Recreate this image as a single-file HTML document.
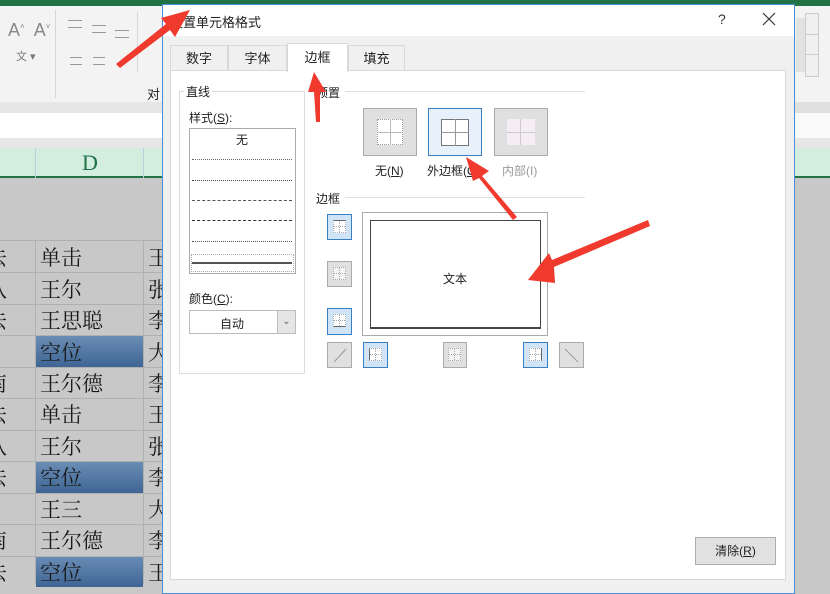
<!DOCTYPE html>
<html><head><meta charset="utf-8"><style>
*{margin:0;padding:0;box-sizing:border-box}
body{width:830px;height:584px;overflow:hidden;position:relative;background:#c8c8c8;font-family:"Liberation Sans","Noto Sans CJK SC",sans-serif;font-size:12px;color:#222}
.a{position:absolute}
.cell{position:absolute;font-family:"Noto Serif CJK SC",serif;font-size:21px;color:#1a1a1a;line-height:31px}
.bb{position:absolute;border:1px solid #aaa;background:#e0e0e0}
.bs{position:absolute;border:1px solid #3a7fc4;background:#cfe4f7}
.g{position:absolute;width:13px;height:13px;background:#fff;border:1px dotted #aaa}
.g:before{content:"";position:absolute;left:5px;top:0;width:1px;height:11px;border-left:1px dotted #aaa}
.g:after{content:"";position:absolute;left:0;top:5px;width:11px;height:1px;border-top:1px dotted #aaa}
</style></head><body>
<div class="a" style="left:0;top:0;width:830px;height:6px;background:#217346"></div>
<div class="a" style="left:0;top:6px;width:830px;height:96px;background:#f3f3f3"></div>
<div class="a" style="left:55px;top:10px;width:1px;height:88px;background:#d6d6d6"></div>
<div class="a" style="left:8px;top:20px;font-size:18px;color:#888">A<sup style="font-size:8px">˄</sup>&nbsp; A<sup style="font-size:8px">˅</sup></div>
<div class="a" style="left:16px;top:48px;font-size:11px;color:#777">文 ▾</div>
<div class="a" style="left:68px;top:20px;width:14px;height:8px;border-top:1px solid #999;border-bottom:1px solid #999"></div>
<div class="a" style="left:92px;top:25px;width:14px;height:8px;border-top:1px solid #999;border-bottom:1px solid #999"></div>
<div class="a" style="left:115px;top:30px;width:14px;height:8px;border-top:1px solid #999;border-bottom:1px solid #999"></div>
<div class="a" style="left:70px;top:57px;width:12px;height:8px;border-top:1px solid #999;border-bottom:1px solid #999"></div>
<div class="a" style="left:93px;top:57px;width:12px;height:8px;border-top:1px solid #999;border-bottom:1px solid #999"></div>
<div class="a" style="left:137px;top:12px;width:1px;height:60px;background:#d6d6d6"></div>
<div class="a" style="left:147px;top:84px;font-size:13px">对</div>
<div class="a" style="left:0;top:102px;width:830px;height:11px;background:#e6e6e6"></div>
<div class="a" style="left:0;top:113px;width:830px;height:25px;background:#fff"></div>
<div class="a" style="left:0;top:138px;width:830px;height:10px;background:#e6e6e6"></div>
<div class="a" style="left:0;top:148px;width:830px;height:30px;background:#d3eddf;border-bottom:2px solid #217346"></div>
<div class="a" style="left:35px;top:148px;width:1px;height:30px;background:#bcd"></div>
<div class="a" style="left:143px;top:148px;width:1px;height:30px;background:#bcd"></div>
<div class="a" style="left:82px;top:150px;font-family:'Liberation Serif',serif;font-size:22px;color:#217346">D</div>
<div class="a" style="left:0;top:178px;width:830px;height:406px;background:#c8c8c8"></div>
<div class="a" style="left:35px;top:241px;width:1px;height:343px;background:#b0b0b0"></div>
<div class="a" style="left:143px;top:241px;width:1px;height:343px;background:#b0b0b0"></div>
<div class="a" style="left:36px;top:336px;width:107px;height:31px;background:linear-gradient(#6a8db5,#3e6594)"></div>
<div class="a" style="left:36px;top:462px;width:107px;height:31px;background:linear-gradient(#6a8db5,#3e6594)"></div>
<div class="a" style="left:36px;top:556px;width:107px;height:31px;background:linear-gradient(#6a8db5,#3e6594)"></div>
<div class="a" style="left:0;top:240px;width:170px;height:1px;background:#b0b0b0"></div>
<div class="a" style="left:0;top:272px;width:170px;height:1px;background:#b0b0b0"></div>
<div class="a" style="left:0;top:304px;width:170px;height:1px;background:#b0b0b0"></div>
<div class="a" style="left:0;top:335px;width:170px;height:1px;background:#b0b0b0"></div>
<div class="a" style="left:0;top:367px;width:170px;height:1px;background:#b0b0b0"></div>
<div class="a" style="left:0;top:398px;width:170px;height:1px;background:#b0b0b0"></div>
<div class="a" style="left:0;top:430px;width:170px;height:1px;background:#b0b0b0"></div>
<div class="a" style="left:0;top:461px;width:170px;height:1px;background:#b0b0b0"></div>
<div class="a" style="left:0;top:493px;width:170px;height:1px;background:#b0b0b0"></div>
<div class="a" style="left:0;top:524px;width:170px;height:1px;background:#b0b0b0"></div>
<div class="a" style="left:0;top:556px;width:170px;height:1px;background:#b0b0b0"></div>
<div class="cell" style="left:-14px;top:242px">去</div>
<div class="cell" style="left:-14px;top:274px">八</div>
<div class="cell" style="left:-14px;top:305px">去</div>
<div class="cell" style="left:-14px;top:368px">南</div>
<div class="cell" style="left:-14px;top:399px">去</div>
<div class="cell" style="left:-14px;top:431px">八</div>
<div class="cell" style="left:-14px;top:462px">去</div>
<div class="cell" style="left:-14px;top:525px">南</div>
<div class="cell" style="left:-14px;top:557px">去</div>
<div class="cell" style="left:40px;top:242px">单击</div>
<div class="cell" style="left:40px;top:274px">王尔</div>
<div class="cell" style="left:40px;top:305px">王思聪</div>
<div class="cell" style="left:40px;top:337px">空位</div>
<div class="cell" style="left:40px;top:368px">王尔德</div>
<div class="cell" style="left:40px;top:399px">单击</div>
<div class="cell" style="left:40px;top:431px">王尔</div>
<div class="cell" style="left:40px;top:462px">空位</div>
<div class="cell" style="left:40px;top:494px">王三</div>
<div class="cell" style="left:40px;top:525px">王尔德</div>
<div class="cell" style="left:40px;top:557px">空位</div>
<div class="cell" style="left:148px;top:242px">王</div>
<div class="cell" style="left:148px;top:274px">张</div>
<div class="cell" style="left:148px;top:305px">李</div>
<div class="cell" style="left:148px;top:337px">大</div>
<div class="cell" style="left:148px;top:368px">李</div>
<div class="cell" style="left:148px;top:399px">王</div>
<div class="cell" style="left:148px;top:431px">张</div>
<div class="cell" style="left:148px;top:462px">李</div>
<div class="cell" style="left:148px;top:494px">大</div>
<div class="cell" style="left:148px;top:525px">李</div>
<div class="cell" style="left:148px;top:557px">王</div>
<div class="a" style="left:795px;top:6px;width:35px;height:96px;background:#f3f3f3"></div>
<div class="a" style="left:796px;top:18px;width:10px;height:54px;background:#e2e2e2"></div>
<div class="a" style="left:805px;top:13px;width:14px;height:64px;border:1px solid #ccc;background:#f0f0f0"></div>
<div class="a" style="left:805px;top:34px;width:14px;height:1px;background:#ccc"></div>
<div class="a" style="left:805px;top:54px;width:14px;height:1px;background:#ccc"></div>
<div class="a" style="left:795px;top:102px;width:35px;height:11px;background:#e0e0e0"></div>
<div class="a" style="left:795px;top:113px;width:35px;height:25px;background:#fafafa"></div>
<!-- Dialog -->
<div class="a" style="left:162px;top:4px;width:633px;height:590px;background:#f0f0f0;border:1px solid #4a90d9"></div>
<div class="a" style="left:163px;top:5px;width:631px;height:31px;background:#fff"></div>
<div class="a" style="left:170px;top:12px;font-size:13px;color:#222">设置单元格格式</div>
<div class="a" style="left:718px;top:11px;font-size:14px;color:#333">?</div>
<svg class="a" style="left:762px;top:12px" width="14" height="14"><path d="M1 1L13 13M13 1L1 13" stroke="#333" stroke-width="1.2"/></svg>
<div class="a" style="left:170px;top:45px;width:58px;height:26px;border:1px solid #d9d9d9;border-bottom:none;background:#f0f0f0;text-align:center;line-height:26px;font-size:13px">数字</div>
<div class="a" style="left:228px;top:45px;width:59px;height:26px;border:1px solid #d9d9d9;border-bottom:none;background:#f0f0f0;text-align:center;line-height:26px;font-size:13px">字体</div>
<div class="a" style="left:348px;top:45px;width:57px;height:26px;border:1px solid #d9d9d9;border-bottom:none;background:#f0f0f0;text-align:center;line-height:26px;font-size:13px">填充</div>
<div class="a" style="left:170px;top:70px;width:616px;height:510px;background:#fff;border:1px solid #d9d9d9"></div>
<div class="a" style="left:287px;top:43px;width:61px;height:29px;border:1px solid #d9d9d9;border-bottom:none;background:#fff;text-align:center;line-height:28px;font-size:13px">边框</div>
<div class="a" style="left:179px;top:91px;width:126px;height:283px;border:1px solid #dcdcdc"></div>
<div class="a" style="left:184px;top:83px;background:#fff;padding:0 2px;font-size:12px">直线</div>
<div class="a" style="left:189px;top:109px">样式(<u>S</u>):</div>
<div class="a" style="left:189px;top:128px;width:107px;height:146px;border:1px solid #aaa"></div>
<div class="a" style="left:236px;top:131px;font-size:12px">无</div>
<div class="a" style="left:192px;top:159px;width:100px;border-top:1px dotted #666"></div>
<div class="a" style="left:192px;top:180px;width:100px;border-top:1px dotted #444"></div>
<div class="a" style="left:192px;top:200px;width:100px;border-top:1px dashed #555"></div>
<div class="a" style="left:192px;top:220px;width:100px;border-top:1px dashed #333"></div>
<div class="a" style="left:192px;top:241px;width:100px;border-top:1px dotted #555"></div>
<div class="a" style="left:191px;top:254px;width:103px;height:18px;border:1px dotted #aaa"></div>
<div class="a" style="left:192px;top:262px;width:100px;border-top:2px solid #555"></div>
<div class="a" style="left:189px;top:290px">颜色(<u>C</u>):</div>
<div class="a" style="left:189px;top:310px;width:107px;height:24px;border:1px solid #bbb;background:#fff"></div>
<div class="a" style="left:220px;top:315px;font-size:12px">自动</div>
<div class="a" style="left:277px;top:311px;width:18px;height:22px;background:#e5e5e5;border-left:1px solid #bbb;text-align:center;color:#666;font-size:10px;line-height:22px">⌄</div>
<div class="a" style="left:316px;top:84px">预置</div>
<div class="a" style="left:345px;top:91px;width:240px;height:1px;background:#e0e0e0"></div>
<div class="bb" style="left:363px;top:108px;width:54px;height:48px"></div>
<div class="a" style="left:377px;top:119px;width:26px;height:26px;border:1px dotted #999;background:#fff"></div>
<div class="a" style="left:390px;top:119px;width:1px;height:26px;background:#bbb"></div>
<div class="a" style="left:377px;top:132px;width:26px;height:1px;background:#bbb"></div>
<div class="bs" style="left:428px;top:108px;width:54px;height:48px;background:#e6f1fb"></div>
<div class="a" style="left:441px;top:119px;width:28px;height:27px;border:1px solid #777;background:#fff"></div>
<div class="a" style="left:455px;top:119px;width:1px;height:27px;background:#999"></div>
<div class="a" style="left:441px;top:132px;width:28px;height:1px;background:#999"></div>
<div class="bb" style="left:494px;top:108px;width:54px;height:48px"></div>
<div class="a" style="left:507px;top:119px;width:28px;height:26px;background:#f4eef4"></div>
<div class="a" style="left:520px;top:119px;width:1px;height:26px;background:#ccc"></div>
<div class="a" style="left:507px;top:132px;width:28px;height:1px;background:#ccc"></div>
<div class="a" style="left:375px;top:162px;font-size:12px">无(<u>N</u>)</div>
<div class="a" style="left:427px;top:162px;font-size:12px">外边框(<u>O</u>)</div>
<div class="a" style="left:502px;top:162px;font-size:12px;color:#999">内部(I)</div>
<div class="a" style="left:316px;top:190px">边框</div>
<div class="a" style="left:345px;top:197px;width:240px;height:1px;background:#e0e0e0"></div>
<div class="bs" style="left:327px;top:214px;width:25px;height:26px"></div>
<div class="bb" style="left:327px;top:261px;width:25px;height:26px"></div>
<div class="bs" style="left:327px;top:308px;width:25px;height:27px"></div>
<div class="bb" style="left:327px;top:342px;width:25px;height:26px"></div>
<div class="bs" style="left:363px;top:342px;width:25px;height:26px"></div>
<div class="bb" style="left:443px;top:342px;width:24px;height:26px"></div>
<div class="bs" style="left:523px;top:342px;width:25px;height:26px"></div>
<div class="bb" style="left:559px;top:342px;width:25px;height:26px"></div>
<div class="g" style="left:333px;top:220px;border-top:1px solid #666"></div>
<div class="g" style="left:333px;top:267px;background:#f4f4f4"></div>
<div class="g" style="left:333px;top:314px;border-bottom:1px solid #666"></div>
<div class="g" style="left:369px;top:348px;border-left:1px solid #666"></div>
<div class="g" style="left:448px;top:348px;background:#f4f4f4"></div>
<div class="g" style="left:529px;top:348px;border-right:1px solid #666"></div>
<svg class="a" style="left:327px;top:342px" width="258" height="27"><line x1="7" y1="20" x2="19" y2="7" stroke="#999"/><line x1="238" y1="7" x2="251" y2="20" stroke="#999"/></svg>
<div class="a" style="left:362px;top:212px;width:186px;height:124px;border:1px solid #aaa;background:#fff"></div>
<div class="a" style="left:370px;top:220px;width:171px;height:109px;border:1px solid #444;border-bottom-width:2px"></div>
<div class="a" style="left:443px;top:270px;font-size:12px">文本</div>
<div class="a" style="left:695px;top:537px;width:81px;height:28px;border:1px solid #adadad;background:#e1e1e1;text-align:center;line-height:26px;font-size:12px">清除(<u>R</u>)</div>
<svg class="a" style="left:0;top:0" width="830" height="584">
<g fill="#f03a2e">
<polygon points="116,64 120,68 170,30 175,37 190,10 161,18 166,24"/>
<polygon points="316,122 320,122 320,92 326,92 314,72 308,92 314,92"/>
<polygon points="513,220 517,217 482,176 489,171 466,157 473,181 479,178"/>
<polygon points="650,226 648,220 552,260 549,253 528,280 555,283 554,267"/>
</g>
</svg>
</body></html>
